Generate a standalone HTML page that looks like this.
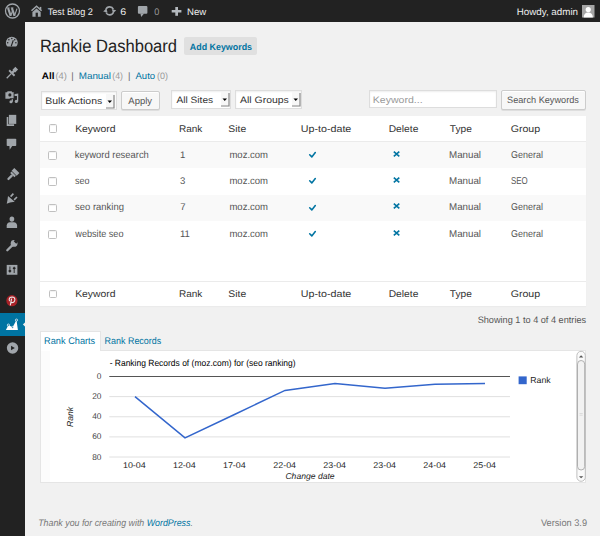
<!DOCTYPE html>
<html><head><meta charset="utf-8"><title>Rankie Dashboard</title>
<style>
html,body{margin:0;padding:0;}
body{width:600px;height:536px;overflow:hidden;position:relative;background:#f1f1f1;font-family:"Liberation Sans",sans-serif;}
.t{position:absolute;white-space:nowrap;text-rendering:geometricPrecision;}
</style></head><body>
<div style="position:absolute;left:0;top:0;width:600px;height:22px;background:#222;"></div><div style="position:absolute;left:0;top:0;width:25px;height:536px;background:#222;"></div><svg style="position:absolute;left:0;top:0" width="25" height="22" viewBox="0 0 25 22">
<circle cx="12.5" cy="11" r="7" fill="none" stroke="#a0a5aa" stroke-width="1.3"/>
<path d="M8.1 8.2 L10.7 15.9 M11.9 8.2 L14.5 15.9" stroke="#a0a5aa" stroke-width="2.1"/>
<path d="M10.7 15.9 L12.7 10.4 M14.5 15.9 L17.0 8.6" stroke="#a0a5aa" stroke-width="1.1"/>
<path d="M6.9 7.9 H9.6 M10.8 7.9 H13.4" stroke="#a0a5aa" stroke-width="0.9"/>
</svg><svg style="position:absolute;left:28px;top:2px" width="18" height="18" viewBox="28 2 18 18">
<path d="M31.5 10.7 L36.55 6.3 L41.6 10.7" fill="none" stroke="#a0a5aa" stroke-width="1.5"/>
<rect x="39.7" y="6.9" width="1.6" height="2.8" fill="#a0a5aa"/>
<path d="M32.4 16.8 V12.1 L36.55 8.5 L40.7 12.1 V16.8 Z" fill="#a0a5aa"/>
<rect x="35.6" y="12.7" width="2.3" height="4.2" fill="#222"/>
</svg><div class="t" style="left:48.000px;top:7.60px;font-size:9.6px;line-height:9.6px;color:#eee;font-weight:400;font-style:normal;transform:translateX(-0.333px) scaleX(0.9529);transform-origin:0 0;">Test Blog 2</div><svg style="position:absolute;left:100px;top:2px" width="20" height="18" viewBox="100 2 20 18">
<path d="M105.9 9.6 A4.05 4.05 0 0 1 113.4 9.3" fill="none" stroke="#a0a5aa" stroke-width="1.6"/>
<path d="M113.5 12.2 A4.05 4.05 0 0 1 106 12.5" fill="none" stroke="#a0a5aa" stroke-width="1.6"/>
<path d="M103.2 11.6 L106.3 8.5 L107.6 12.6 Z" fill="#a0a5aa"/>
<path d="M116.2 10.2 L113.1 13.3 L111.8 9.2 Z" fill="#a0a5aa"/>
</svg><div class="t" style="left:120.000px;top:7.60px;font-size:9.6px;line-height:9.6px;color:#eee;font-weight:400;font-style:normal;transform:translateX(0.268px) scaleX(1.1082);transform-origin:0 0;">6</div><svg style="position:absolute;left:134px;top:2px" width="18" height="18" viewBox="134 2 18 18">
<rect x="137.9" y="6" width="9.5" height="7.8" rx="1" fill="#a0a5aa"/>
<path d="M140.4 13.5 L144.1 13.5 L141.2 16.9 Z" fill="#a0a5aa"/>
</svg><div class="t" style="left:154.000px;top:7.60px;font-size:9.6px;line-height:9.6px;color:#999;font-weight:400;font-style:normal;transform:translateX(0.287px) scaleX(0.9468);transform-origin:0 0;">0</div><svg style="position:absolute;left:166px;top:2px" width="20" height="18" viewBox="166 2 20 18">
<rect x="175.3" y="7" width="2.7" height="8.8" fill="#b4b9be"/>
<rect x="171.7" y="10" width="9.7" height="2.5" fill="#b4b9be"/>
</svg><div class="t" style="left:187.024px;top:7.60px;font-size:9.6px;line-height:9.6px;color:#eee;font-weight:400;font-style:normal;">New</div><div class="t" style="left:517.000px;top:7.60px;font-size:9.6px;line-height:9.6px;color:#eee;font-weight:400;font-style:normal;transform:translateX(-0.284px) scaleX(1.0203);transform-origin:0 0;">Howdy, admin</div><svg style="position:absolute;left:582px;top:5px" width="13" height="13" viewBox="0 0 13 13">
<rect x="0" y="0" width="12.5" height="12.5" fill="#a5a5a5"/>
<circle cx="6.25" cy="4.6" r="2.6" fill="#fff"/>
<path d="M1.6 12.5 Q2 7.6 6.25 7.6 Q10.5 7.6 10.9 12.5 Z" fill="#fff"/>
</svg><div class="t" style="left:40.000px;top:38.01px;font-size:17.8px;line-height:17.8px;color:#222;font-weight:400;font-style:normal;transform:translateX(-0.123px) scaleX(0.9313);transform-origin:0 0;">Rankie Dashboard</div><div style="position:absolute;left:184px;top:37px;width:73px;height:18px;background:#e0e0e0;border-radius:2px"></div><div class="t" style="left:190.000px;top:42.71px;font-size:9.2px;line-height:9.2px;color:#0074a2;font-weight:700;font-style:normal;transform:translateX(-0.178px) scaleX(0.9673);transform-origin:0 0;">Add Keywords</div><div class="t" style="left:42.000px;top:70.91px;font-size:9.4px;line-height:9.4px;color:#000;font-weight:700;font-style:normal;transform:translateX(-0.197px) scaleX(1.0551);transform-origin:0 0;">All</div><div class="t" style="left:55.443px;top:70.91px;font-size:9.4px;line-height:9.4px;color:#999;font-weight:400;font-style:normal;">(4)</div><div class="t" style="left:71.298px;top:70.91px;font-size:9.4px;line-height:9.4px;color:#666;font-weight:400;font-style:normal;">|</div><div class="t" style="left:79.000px;top:70.91px;font-size:9.4px;line-height:9.4px;color:#0074a2;font-weight:400;font-style:normal;transform:translateX(-0.285px) scaleX(1.0494);transform-origin:0 0;">Manual</div><div class="t" style="left:112.000px;top:70.91px;font-size:9.4px;line-height:9.4px;color:#999;font-weight:400;font-style:normal;transform:translateX(0.270px) scaleX(0.9306);transform-origin:0 0;">(4)</div><div class="t" style="left:127.948px;top:70.91px;font-size:9.4px;line-height:9.4px;color:#666;font-weight:400;font-style:normal;">|</div><div class="t" style="left:136.000px;top:70.91px;font-size:9.4px;line-height:9.4px;color:#0074a2;font-weight:400;font-style:normal;transform:translateX(-0.500px) scaleX(1.0160);transform-origin:0 0;">Auto</div><div class="t" style="left:157.000px;top:70.91px;font-size:9.4px;line-height:9.4px;color:#999;font-weight:400;font-style:normal;transform:translateX(-0.041px) scaleX(0.9591);transform-origin:0 0;">(0)</div><div style="position:absolute;left:41px;top:91px;width:76px;height:19px;background:#fff;box-sizing:border-box;border:1px solid #ddd;box-shadow:inset 0 1px 2px rgba(0,0,0,.07)"></div>
<div class="t" style="left:45.000px;top:96.70px;font-size:9.3px;line-height:9.3px;color:#333;font-weight:400;font-style:normal;transform:translateX(0.169px) scaleX(1.1268);transform-origin:0 0;">Bulk Actions</div><svg style="position:absolute;left:105.5px;top:93.5px" width="9" height="15" viewBox="0 0 9 15">
<rect x="0" y="0" width="9" height="15" fill="#f7f7f7"/>
<path d="M8 1 V14 H0" fill="none" stroke="#888" stroke-width="1.2"/>
<path d="M1.5 6.5 H6 L3.75 9 Z" fill="#000"/>
</svg>
<div style="position:absolute;left:121px;top:91px;width:39px;height:19px;background:#f7f7f7;box-sizing:border-box;border:1px solid #ccc;border-radius:2px;box-shadow:inset 0 1px 0 #fff,0 1px 0 rgba(0,0,0,.08)"></div>
<div class="t" style="left:128.000px;top:96.61px;font-size:9.3px;line-height:9.3px;color:#555;font-weight:400;font-style:normal;transform:translateX(0.350px) scaleX(1.0166);transform-origin:0 0;">Apply</div><div style="position:absolute;left:171.2px;top:89.8px;width:60.0px;height:18.799999999999997px;background:#fff;box-sizing:border-box;border:1px solid #ddd;box-shadow:inset 0 1px 2px rgba(0,0,0,.07)"></div>
<div class="t" style="left:176.000px;top:95.70px;font-size:9.3px;line-height:9.3px;color:#333;font-weight:400;font-style:normal;transform:translateX(0.500px) scaleX(1.0896);transform-origin:0 0;">All Sites</div><svg style="position:absolute;left:220.79999999999998px;top:92.3px" width="9" height="15" viewBox="0 0 9 15">
<rect x="0" y="0" width="9" height="15" fill="#f7f7f7"/>
<path d="M8 1 V14 H0" fill="none" stroke="#888" stroke-width="1.2"/>
<path d="M1.5 6.5 H6 L3.75 9 Z" fill="#000"/>
</svg>
<div style="position:absolute;left:235.2px;top:89.8px;width:66.80000000000001px;height:18.799999999999997px;background:#fff;box-sizing:border-box;border:1px solid #ddd;box-shadow:inset 0 1px 2px rgba(0,0,0,.07)"></div>
<div class="t" style="left:240.000px;top:95.70px;font-size:9.3px;line-height:9.3px;color:#333;font-weight:400;font-style:normal;transform:translateX(0.050px) scaleX(1.1232);transform-origin:0 0;">All Groups</div><svg style="position:absolute;left:291.6px;top:92.3px" width="9" height="15" viewBox="0 0 9 15">
<rect x="0" y="0" width="9" height="15" fill="#f7f7f7"/>
<path d="M8 1 V14 H0" fill="none" stroke="#888" stroke-width="1.2"/>
<path d="M1.5 6.5 H6 L3.75 9 Z" fill="#000"/>
</svg>
<div style="position:absolute;left:369px;top:89.6px;width:127.6px;height:18.8px;background:#fff;box-sizing:border-box;border:1px solid #ddd;box-shadow:inset 0 1px 2px rgba(0,0,0,.07)"></div><div class="t" style="left:373.000px;top:95.81px;font-size:9.3px;line-height:9.3px;color:#999;font-weight:400;font-style:normal;transform:translateX(-0.193px) scaleX(1.1328);transform-origin:0 0;">Keyword...</div><div style="position:absolute;left:500.6px;top:90.4px;width:85.19999999999993px;height:19.19999999999999px;background:#f7f7f7;box-sizing:border-box;border:1px solid #ccc;border-radius:2px;box-shadow:inset 0 1px 0 #fff,0 1px 0 rgba(0,0,0,.08)"></div>
<div class="t" style="left:507.000px;top:96.00px;font-size:9.3px;line-height:9.3px;color:#555;font-weight:400;font-style:normal;transform:translateX(0.034px) scaleX(0.9864);transform-origin:0 0;">Search Keywords</div><div style="position:absolute;left:40px;top:116px;width:546px;height:190px;background:#fff;box-shadow:0 1px 1px rgba(0,0,0,.025)"></div><div style="position:absolute;left:40px;top:141px;width:546px;height:1px;background:#ebebeb"></div><div style="position:absolute;left:40px;top:142px;width:546px;height:26px;background:#f9f9f9"></div><div style="position:absolute;left:40px;top:194.6px;width:546px;height:26.400000000000006px;background:#f9f9f9"></div><div style="position:absolute;left:40px;top:281px;width:546px;height:1px;background:#ebebeb"></div><div style="position:absolute;left:48.6px;top:124px;width:8.5px;height:8.5px;box-sizing:border-box;border:1px solid #c0c0c0;border-radius:1.5px;background:#fff;box-shadow:inset 0 1px 1px rgba(0,0,0,.06)"></div>
<div class="t" style="left:75.000px;top:125.40px;font-size:9.7px;line-height:9.7px;color:#333;font-weight:400;font-style:normal;transform:translateX(0.169px) scaleX(1.0709);transform-origin:0 0;">Keyword</div><div class="t" style="left:179.000px;top:125.40px;font-size:9.7px;line-height:9.7px;color:#333;font-weight:400;font-style:normal;transform:translateX(0.002px) scaleX(1.0312);transform-origin:0 0;">Rank</div><div class="t" style="left:228.000px;top:125.40px;font-size:9.7px;line-height:9.7px;color:#333;font-weight:400;font-style:normal;transform:translateX(0.344px) scaleX(1.0676);transform-origin:0 0;">Site</div><div class="t" style="left:301.000px;top:125.40px;font-size:9.7px;line-height:9.7px;color:#333;font-weight:400;font-style:normal;transform:translateX(-0.250px) scaleX(1.1049);transform-origin:0 0;">Up-to-date</div><div class="t" style="left:389.000px;top:125.40px;font-size:9.7px;line-height:9.7px;color:#333;font-weight:400;font-style:normal;transform:translateX(-0.322px) scaleX(1.0590);transform-origin:0 0;">Delete</div><div class="t" style="left:450.000px;top:125.40px;font-size:9.7px;line-height:9.7px;color:#333;font-weight:400;font-style:normal;transform:translateX(-0.202px) scaleX(1.0472);transform-origin:0 0;">Type</div><div class="t" style="left:511.000px;top:125.40px;font-size:9.7px;line-height:9.7px;color:#333;font-weight:400;font-style:normal;transform:translateX(-0.327px) scaleX(1.0949);transform-origin:0 0;">Group</div><div style="position:absolute;left:48.6px;top:289.7px;width:8.5px;height:8.5px;box-sizing:border-box;border:1px solid #c0c0c0;border-radius:1.5px;background:#fff;box-shadow:inset 0 1px 1px rgba(0,0,0,.06)"></div>
<div class="t" style="left:75.000px;top:289.90px;font-size:9.7px;line-height:9.7px;color:#333;font-weight:400;font-style:normal;transform:translateX(0.169px) scaleX(1.0709);transform-origin:0 0;">Keyword</div><div class="t" style="left:179.000px;top:289.90px;font-size:9.7px;line-height:9.7px;color:#333;font-weight:400;font-style:normal;transform:translateX(0.002px) scaleX(1.0312);transform-origin:0 0;">Rank</div><div class="t" style="left:228.000px;top:289.90px;font-size:9.7px;line-height:9.7px;color:#333;font-weight:400;font-style:normal;transform:translateX(0.344px) scaleX(1.0676);transform-origin:0 0;">Site</div><div class="t" style="left:301.000px;top:289.90px;font-size:9.7px;line-height:9.7px;color:#333;font-weight:400;font-style:normal;transform:translateX(-0.250px) scaleX(1.1049);transform-origin:0 0;">Up-to-date</div><div class="t" style="left:389.000px;top:289.90px;font-size:9.7px;line-height:9.7px;color:#333;font-weight:400;font-style:normal;transform:translateX(-0.322px) scaleX(1.0590);transform-origin:0 0;">Delete</div><div class="t" style="left:450.000px;top:289.90px;font-size:9.7px;line-height:9.7px;color:#333;font-weight:400;font-style:normal;transform:translateX(-0.202px) scaleX(1.0472);transform-origin:0 0;">Type</div><div class="t" style="left:511.000px;top:289.90px;font-size:9.7px;line-height:9.7px;color:#333;font-weight:400;font-style:normal;transform:translateX(-0.327px) scaleX(1.0949);transform-origin:0 0;">Group</div><div style="position:absolute;left:48.3px;top:151.2px;width:8.5px;height:8.5px;box-sizing:border-box;border:1px solid #c0c0c0;border-radius:1.5px;background:#fff;box-shadow:inset 0 1px 1px rgba(0,0,0,.06)"></div>
<div class="t" style="left:75.000px;top:150.51px;font-size:9.9px;line-height:9.9px;color:#555;font-weight:400;font-style:normal;transform:translateX(-0.314px) scaleX(0.9509);transform-origin:0 0;">keyword research</div><div class="t" style="left:179.978px;top:150.51px;font-size:9.6px;line-height:9.6px;color:#555;font-weight:400;font-style:normal;">1</div><div class="t" style="left:229.000px;top:150.51px;font-size:9.9px;line-height:9.9px;color:#555;font-weight:400;font-style:normal;transform:translateX(0.428px) scaleX(0.9631);transform-origin:0 0;">moz.com</div><svg style="position:absolute;left:304px;top:146.0px" width="20" height="16" viewBox="0 0 20 16">
<path d="M5.7 8.7 L7.8 10.9 L11.3 6.5" fill="none" stroke="#0074a2" stroke-width="1.55" stroke-linecap="round" stroke-linejoin="round"/></svg>
<svg style="position:absolute;left:386px;top:145.5px" width="20" height="16" viewBox="0 0 20 16">
<path d="M7.8 5.6 L13.3 10.4 M13.3 5.6 L7.8 10.4" fill="none" stroke="#0074a2" stroke-width="1.6"/></svg>
<div class="t" style="left:449.000px;top:150.51px;font-size:9.9px;line-height:9.9px;color:#555;font-weight:400;font-style:normal;transform:translateX(0.015px) scaleX(0.9884);transform-origin:0 0;">Manual</div><div class="t" style="left:511.000px;top:150.51px;font-size:9.9px;line-height:9.9px;color:#555;font-weight:400;font-style:normal;transform:translateX(-0.003px) scaleX(0.9103);transform-origin:0 0;">General</div><div style="position:absolute;left:48.3px;top:177.4px;width:8.5px;height:8.5px;box-sizing:border-box;border:1px solid #c0c0c0;border-radius:1.5px;background:#fff;box-shadow:inset 0 1px 1px rgba(0,0,0,.06)"></div>
<div class="t" style="left:75.000px;top:176.90px;font-size:9.9px;line-height:9.9px;color:#555;font-weight:400;font-style:normal;transform:translateX(0.071px) scaleX(0.9121);transform-origin:0 0;">seo</div><div class="t" style="left:180.112px;top:176.91px;font-size:9.6px;line-height:9.6px;color:#555;font-weight:400;font-style:normal;">3</div><div class="t" style="left:229.000px;top:176.90px;font-size:9.9px;line-height:9.9px;color:#555;font-weight:400;font-style:normal;transform:translateX(0.428px) scaleX(0.9631);transform-origin:0 0;">moz.com</div><svg style="position:absolute;left:304px;top:172.4px" width="20" height="16" viewBox="0 0 20 16">
<path d="M5.7 8.7 L7.8 10.9 L11.3 6.5" fill="none" stroke="#0074a2" stroke-width="1.55" stroke-linecap="round" stroke-linejoin="round"/></svg>
<svg style="position:absolute;left:386px;top:171.9px" width="20" height="16" viewBox="0 0 20 16">
<path d="M7.8 5.6 L13.3 10.4 M13.3 5.6 L7.8 10.4" fill="none" stroke="#0074a2" stroke-width="1.6"/></svg>
<div class="t" style="left:449.000px;top:176.90px;font-size:9.9px;line-height:9.9px;color:#555;font-weight:400;font-style:normal;transform:translateX(0.015px) scaleX(0.9884);transform-origin:0 0;">Manual</div><div class="t" style="left:511.000px;top:176.90px;font-size:9.9px;line-height:9.9px;color:#555;font-weight:400;font-style:normal;transform:translateX(-0.116px) scaleX(0.7987);transform-origin:0 0;">SEO</div><div style="position:absolute;left:48.3px;top:203.6px;width:8.5px;height:8.5px;box-sizing:border-box;border:1px solid #c0c0c0;border-radius:1.5px;background:#fff;box-shadow:inset 0 1px 1px rgba(0,0,0,.06)"></div>
<div class="t" style="left:75.000px;top:203.40px;font-size:9.9px;line-height:9.9px;color:#555;font-weight:400;font-style:normal;transform:translateX(0.062px) scaleX(0.9568);transform-origin:0 0;">seo ranking</div><div class="t" style="left:180.170px;top:203.41px;font-size:9.6px;line-height:9.6px;color:#555;font-weight:400;font-style:normal;">7</div><div class="t" style="left:229.000px;top:203.40px;font-size:9.9px;line-height:9.9px;color:#555;font-weight:400;font-style:normal;transform:translateX(0.428px) scaleX(0.9631);transform-origin:0 0;">moz.com</div><svg style="position:absolute;left:304px;top:198.9px" width="20" height="16" viewBox="0 0 20 16">
<path d="M5.7 8.7 L7.8 10.9 L11.3 6.5" fill="none" stroke="#0074a2" stroke-width="1.55" stroke-linecap="round" stroke-linejoin="round"/></svg>
<svg style="position:absolute;left:386px;top:198.4px" width="20" height="16" viewBox="0 0 20 16">
<path d="M7.8 5.6 L13.3 10.4 M13.3 5.6 L7.8 10.4" fill="none" stroke="#0074a2" stroke-width="1.6"/></svg>
<div class="t" style="left:449.000px;top:203.40px;font-size:9.9px;line-height:9.9px;color:#555;font-weight:400;font-style:normal;transform:translateX(0.015px) scaleX(0.9884);transform-origin:0 0;">Manual</div><div class="t" style="left:511.000px;top:203.40px;font-size:9.9px;line-height:9.9px;color:#555;font-weight:400;font-style:normal;transform:translateX(-0.003px) scaleX(0.9103);transform-origin:0 0;">General</div><div style="position:absolute;left:48.3px;top:230px;width:8.5px;height:8.5px;box-sizing:border-box;border:1px solid #c0c0c0;border-radius:1.5px;background:#fff;box-shadow:inset 0 1px 1px rgba(0,0,0,.06)"></div>
<div class="t" style="left:75.000px;top:229.71px;font-size:9.9px;line-height:9.9px;color:#555;font-weight:400;font-style:normal;transform:translateX(0.341px) scaleX(0.9227);transform-origin:0 0;">website seo</div><div class="t" style="left:179.978px;top:229.71px;font-size:9.6px;line-height:9.6px;color:#555;font-weight:400;font-style:normal;">11</div><div class="t" style="left:229.000px;top:229.71px;font-size:9.9px;line-height:9.9px;color:#555;font-weight:400;font-style:normal;transform:translateX(0.428px) scaleX(0.9631);transform-origin:0 0;">moz.com</div><svg style="position:absolute;left:304px;top:225.2px" width="20" height="16" viewBox="0 0 20 16">
<path d="M5.7 8.7 L7.8 10.9 L11.3 6.5" fill="none" stroke="#0074a2" stroke-width="1.55" stroke-linecap="round" stroke-linejoin="round"/></svg>
<svg style="position:absolute;left:386px;top:224.7px" width="20" height="16" viewBox="0 0 20 16">
<path d="M7.8 5.6 L13.3 10.4 M13.3 5.6 L7.8 10.4" fill="none" stroke="#0074a2" stroke-width="1.6"/></svg>
<div class="t" style="left:449.000px;top:229.71px;font-size:9.9px;line-height:9.9px;color:#555;font-weight:400;font-style:normal;transform:translateX(0.015px) scaleX(0.9884);transform-origin:0 0;">Manual</div><div class="t" style="left:511.000px;top:229.71px;font-size:9.9px;line-height:9.9px;color:#555;font-weight:400;font-style:normal;transform:translateX(-0.003px) scaleX(0.9103);transform-origin:0 0;">General</div><div class="t" style="left:478.000px;top:314.62px;font-size:9.4px;line-height:9.4px;color:#555;font-weight:400;font-style:normal;transform:translateX(-0.367px) scaleX(0.9770);transform-origin:0 0;">Showing 1 to 4 of 4 entries</div><div style="position:absolute;left:40px;top:350px;width:546px;height:133px;background:#fff;box-sizing:border-box;border:1px solid #e5e5e5"></div><div style="position:absolute;left:40px;top:331px;width:60.5px;height:20px;background:#fff;box-sizing:border-box;border:1px solid #e5e5e5;border-bottom:none"></div><div class="t" style="left:44.000px;top:336.82px;font-size:9.6px;line-height:9.6px;color:#0074a2;font-weight:400;font-style:normal;transform:translateX(0.117px) scaleX(0.9580);transform-origin:0 0;">Rank Charts</div><div class="t" style="left:105.000px;top:336.82px;font-size:9.6px;line-height:9.6px;color:#0074a2;font-weight:400;font-style:normal;transform:translateX(-0.417px) scaleX(0.9319);transform-origin:0 0;">Rank Records</div><div style="position:absolute;left:41px;top:351px;width:8.5px;height:131px;background:#fcfcfc"></div><svg style="position:absolute;left:0;top:0" width="600" height="536" viewBox="0 0 600 536">
<line x1="109.3" y1="376.50" x2="510" y2="376.50" stroke="#555" stroke-width="1"/>
<line x1="109.3" y1="396.62" x2="510" y2="396.62" stroke="#e0e0e0" stroke-width="1"/>
<line x1="109.3" y1="416.75" x2="510" y2="416.75" stroke="#e0e0e0" stroke-width="1"/>
<line x1="109.3" y1="436.88" x2="510" y2="436.88" stroke="#e0e0e0" stroke-width="1"/>
<line x1="109.3" y1="457.00" x2="510" y2="457.00" stroke="#e0e0e0" stroke-width="1"/>
<polyline points="135,396.62 185,437.88 235,414.23 285,390.39 335,383.44 385,388.37 435,384.35 485,383.44" fill="none" stroke="#3366cc" stroke-width="1.5"/>
<rect x="518.6" y="376.4" width="8.1" height="7.8" fill="#3366cc"/>
</svg><div class="t" style="left:110.000px;top:359.31px;font-size:9.0px;line-height:9.0px;color:#000;font-weight:400;font-style:normal;transform:translateX(-0.339px) scaleX(0.9411);transform-origin:0 0;">- Ranking Records of (moz.com) for (seo ranking)</div><div class="t" style="left:96.834px;top:372.11px;font-size:8.3px;line-height:8.3px;color:#444;font-weight:400;font-style:normal;">0</div><div class="t" style="left:92.218px;top:392.24px;font-size:8.3px;line-height:8.3px;color:#444;font-weight:400;font-style:normal;">20</div><div class="t" style="left:92.218px;top:412.36px;font-size:8.3px;line-height:8.3px;color:#444;font-weight:400;font-style:normal;">40</div><div class="t" style="left:92.218px;top:432.49px;font-size:8.3px;line-height:8.3px;color:#444;font-weight:400;font-style:normal;">60</div><div class="t" style="left:92.218px;top:452.61px;font-size:8.3px;line-height:8.3px;color:#444;font-weight:400;font-style:normal;">80</div><div class="t" style="left:123.000px;top:460.81px;font-size:8.3px;line-height:8.3px;color:#222;font-weight:400;font-style:normal;transform:translateX(-0.076px) scaleX(1.0768);transform-origin:0 0;">10-04</div><div class="t" style="left:173.000px;top:460.81px;font-size:8.3px;line-height:8.3px;color:#222;font-weight:400;font-style:normal;transform:translateX(-0.076px) scaleX(1.0768);transform-origin:0 0;">12-04</div><div class="t" style="left:223.000px;top:460.81px;font-size:8.3px;line-height:8.3px;color:#222;font-weight:400;font-style:normal;transform:translateX(-0.076px) scaleX(1.0768);transform-origin:0 0;">17-04</div><div class="t" style="left:273.000px;top:460.81px;font-size:8.3px;line-height:8.3px;color:#222;font-weight:400;font-style:normal;transform:translateX(0.357px) scaleX(1.0683);transform-origin:0 0;">22-04</div><div class="t" style="left:323.000px;top:460.81px;font-size:8.3px;line-height:8.3px;color:#222;font-weight:400;font-style:normal;transform:translateX(0.357px) scaleX(1.0683);transform-origin:0 0;">23-04</div><div class="t" style="left:373.000px;top:460.81px;font-size:8.3px;line-height:8.3px;color:#222;font-weight:400;font-style:normal;transform:translateX(0.357px) scaleX(1.0683);transform-origin:0 0;">23-04</div><div class="t" style="left:423.000px;top:460.81px;font-size:8.3px;line-height:8.3px;color:#222;font-weight:400;font-style:normal;transform:translateX(0.357px) scaleX(1.0683);transform-origin:0 0;">24-04</div><div class="t" style="left:473.000px;top:460.81px;font-size:8.3px;line-height:8.3px;color:#222;font-weight:400;font-style:normal;transform:translateX(0.357px) scaleX(1.0683);transform-origin:0 0;">25-04</div><div class="t" style="left:285.394px;top:471.71px;font-size:8.6px;line-height:8.6px;color:#222;font-weight:400;font-style:italic;">Change date</div><div class="t" style="left:69.7px;top:417px;font-size:8.6px;line-height:8.6px;color:#222;font-style:italic;transform:translate(-50%,-50%) rotate(-90deg)">Rank</div><div class="t" style="left:530.000px;top:376.21px;font-size:8.6px;line-height:8.6px;color:#222;font-weight:400;font-style:normal;transform:translateX(0.311px) scaleX(1.0145);transform-origin:0 0;">Rank</div><svg style="position:absolute;left:570px;top:345px" width="20" height="142" viewBox="570 345 20 142">
<rect x="576.9" y="351.3" width="8.4" height="130" rx="4.2" fill="#fafafa" stroke="#b8b8b8" stroke-width="0.9"/>
<rect x="577.5" y="360.5" width="7.2" height="109.5" rx="3.6" fill="#f2f2f2" stroke="#a8a8a8" stroke-width="0.9"/>
<path d="M578.9 357.4 L581.1 355.3 L583.3 357.4 Z" fill="#555"/>
<path d="M578.9 476.2 L581.1 478.3 L583.3 476.2 Z" fill="#555"/>
<path d="M579.5 413.5 H582.7 M579.5 415.2 H582.7" stroke="#ccc" stroke-width="0.6"/>
</svg><div class="t" style="left:38.000px;top:518.60px;font-size:9.6px;line-height:9.6px;color:#777;font-weight:400;font-style:italic;transform:translateX(0.194px) scaleX(0.9211);transform-origin:0 0;">Thank you for creating with <span style="color:#0074a2">WordPress</span>.</div><div class="t" style="left:541.000px;top:518.76px;font-size:9.6px;line-height:9.6px;color:#777;font-weight:400;font-style:normal;transform:translateX(-0.100px) scaleX(0.9614);transform-origin:0 0;">Version 3.9</div><svg style="position:absolute;left:0;top:0" width="25" height="536" viewBox="0 0 25 536">
<defs><clipPath id="gclip"><rect x="0" y="30" width="25" height="16.6"/></clipPath></defs>
<!-- dashboard gauge -->
<circle cx="11.8" cy="42.8" r="5.95" fill="#a0a5aa" clip-path="url(#gclip)"/>
<circle cx="11.8" cy="38.6" r="0.75" fill="#222"/>
<circle cx="8.9" cy="39.8" r="0.75" fill="#222"/>
<circle cx="14.7" cy="39.8" r="0.75" fill="#222"/>
<circle cx="7.7" cy="42.7" r="0.75" fill="#222"/>
<circle cx="15.9" cy="42.7" r="0.75" fill="#222"/>
<path d="M11.2 46.2 L13.3 40.2" stroke="#222" stroke-width="1.1"/>
<!-- pin -->
<g transform="translate(11.6 73.3) rotate(45)">
<path d="M-1.9 -7.2 H1.9 V-3.2 L1.2 -3.2 L1.2 -1.4 L3.8 -1.4 V0.6 H-3.8 V-1.4 L-1.2 -1.4 L-1.2 -3.2 L-1.9 -3.2 Z" fill="#a0a5aa"/>
<rect x="-0.65" y="0.5" width="1.3" height="6.4" fill="#a0a5aa"/>
</g>
<!-- media -->
<path d="M5.4 92.3 H7 L7.6 91.2 H11.6 L12.2 92.3 H14.1 V98.7 H5.4 Z" fill="#a0a5aa"/>
<circle cx="9.9" cy="94.9" r="1.6" fill="#222"/>
<path d="M12.3 101.8 V95 L17.6 94.3 V101.4" stroke="#a0a5aa" stroke-width="1.3" fill="none"/>
<path d="M12.3 94.3 H17.9 V96 H12.3 Z" fill="#a0a5aa"/>
<circle cx="11" cy="101.8" r="1.55" fill="#a0a5aa"/>
<circle cx="16.3" cy="101.4" r="1.55" fill="#a0a5aa"/>
<path d="M14.1 92.3 V98.7 H9.8" stroke="#222" stroke-width="0.9" fill="none"/>
<!-- pages -->
<rect x="8.9" y="114.85" width="7.35" height="9.05" fill="#a0a5aa"/>
<path d="M7.5 116.9 V125.1 H14.1" stroke="#a0a5aa" stroke-width="1.6" fill="none"/>
<!-- comments -->
<rect x="6.7" y="138.7" width="9.55" height="7.4" rx="0.8" fill="#a0a5aa"/>
<path d="M9.4 145.5 L12.6 145.5 L9.7 149.8 Z" fill="#a0a5aa"/>
<!-- appearance brush -->
<g transform="translate(12.2 175.2) rotate(45)">
<rect x="-3.6" y="-6.6" width="7.2" height="3.8" fill="#a0a5aa"/>
<rect x="-3.0" y="-2.2" width="6.0" height="2.0" fill="#a0a5aa"/>
<rect x="-1.15" y="-0.4" width="2.3" height="6.8" rx="1" fill="#a0a5aa"/>
</g>
<!-- plugins -->
<path d="M8 196 L14.7 201.75 L10 202.5 L6.7 203.8 L7.4 200.5 Z" fill="#a0a5aa"/>
<path d="M10.6 196.6 L13.4 193.6 M14.1 199.9 L17 197" stroke="#a0a5aa" stroke-width="1.6"/>
<!-- users -->
<ellipse cx="11.9" cy="219.1" rx="2.35" ry="2.6" fill="#a0a5aa"/>
<path d="M6.7 227.9 V225.6 Q6.9 222.4 10 222.2 H13.8 Q16.9 222.4 17.1 225.6 V227.9 Z" fill="#a0a5aa"/>
<!-- tools wrench -->
<path d="M7.3 250.3 L12.2 245.4" stroke="#a0a5aa" stroke-width="2.3" stroke-linecap="round"/>
<circle cx="14.1" cy="243.4" r="3.4" fill="#a0a5aa"/>
<path d="M14.3 240.6 L16.8 243.1" stroke="#222" stroke-width="1.8"/>
<circle cx="16.3" cy="241.1" r="1.5" fill="#222"/>
<!-- settings -->
<rect x="6.7" y="264.9" width="10.7" height="9.85" fill="#a0a5aa"/>
<path d="M9.9 266.5 V272.7 M14.2 266.7 V273" stroke="#222" stroke-width="0.9"/>
<ellipse cx="9.9" cy="271.1" rx="1.5" ry="1" fill="#222"/>
<ellipse cx="14.2" cy="268.3" rx="1.5" ry="1" fill="#222"/>
</svg><svg style="position:absolute;left:0;top:290px" width="25" height="22" viewBox="0 290 25 22">
<circle cx="11.9" cy="300.7" r="5.6" fill="#a82228"/>
<path d="M11.6 298.6 L10.3 305.3" stroke="#e8e8e8" stroke-width="1.1"/>
<path d="M11 302.6 Q14.8 302.9 14.9 299.6 Q14.8 296.9 12.2 296.9 Q9.2 297 9.2 299.6 Q9.3 300.6 9.8 301" fill="none" stroke="#e8e8e8" stroke-width="1.05"/>
</svg><div style="position:absolute;left:0;top:313px;width:25px;height:23px;background:#0074a2"></div><svg style="position:absolute;left:0;top:310px" width="26" height="30" viewBox="0 310 26 30">
<path d="M5.9 329.9 L8.4 325.1 L12.6 327.3 L16.5 320.1 L17.9 329.9 Z" fill="#fff"/>
<circle cx="8.4" cy="325.1" r="1.1" fill="#0074a2" stroke="#fff" stroke-width="0.7"/>
<circle cx="12.6" cy="327.3" r="0.9" fill="#0074a2" stroke="#fff" stroke-width="0.6"/>
<circle cx="16.5" cy="320.1" r="1.1" fill="#0074a2" stroke="#fff" stroke-width="0.7"/>
<path d="M25.2 322.3 L22.9 324.5 L25.2 326.7 Z" fill="#f1f1f1"/>
</svg><svg style="position:absolute;left:0;top:340px" width="25" height="16" viewBox="0 340 25 16">
<circle cx="12.55" cy="348.05" r="5.7" fill="#a0a5aa"/>
<path d="M11.05 345.8 L14.8 348.05 L11.05 350.3 Z" fill="#222"/>
</svg>
</body></html>
